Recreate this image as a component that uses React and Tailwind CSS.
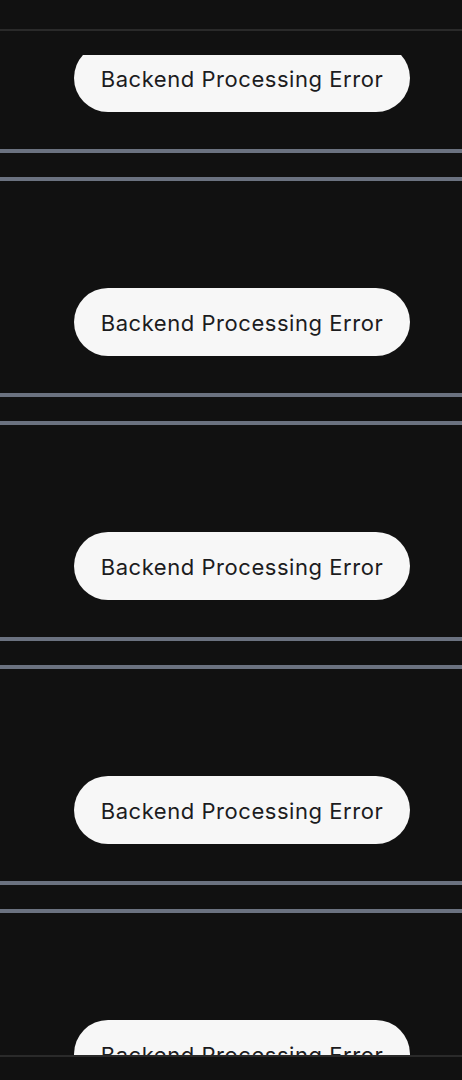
import React from "react";

const messages = [1, 2, 3, 4, 5].map((id) => ({ id, text: "Backend Processing Error" }));

const MessageRow = ({ text }) => (
  <div className="border-y-4 border-[#6b7280] pt-[107px] pb-[37px]">
    <div className="flex justify-end pr-[52px]">
      <div className="w-[336px] h-[68px] pt-[2px] rounded-full bg-[#f7f7f7] flex items-center justify-center text-[22px] text-[#1c1c1e] tracking-[0.025em] whitespace-nowrap">
        {text}
      </div>
    </div>
  </div>
);

const App = () => {
  return (
    <div
      className="h-[1080px] w-full bg-[#111111] flex flex-col overflow-hidden"
      style={{ fontFamily: "Inter, 'Noto Sans', sans-serif" }}
    >
      {/* Top bar */}
      <div className="h-[29px] shrink-0 border-b-2 border-[#2a2a2a] box-content" />
      <div className="h-[24px] shrink-0" />

      {/* Scrolled message list */}
      <div className="h-[1000px] shrink-0 overflow-hidden">
        <div className="-mt-[122px] flex flex-col gap-6">
          {messages.map((m) => (
            <MessageRow key={m.id} text={m.text} />
          ))}
        </div>
      </div>

      {/* Footer */}
      <div className="flex-1 border-t-2 border-[#2a2a2a]" />
    </div>
  );
};

export default App;
